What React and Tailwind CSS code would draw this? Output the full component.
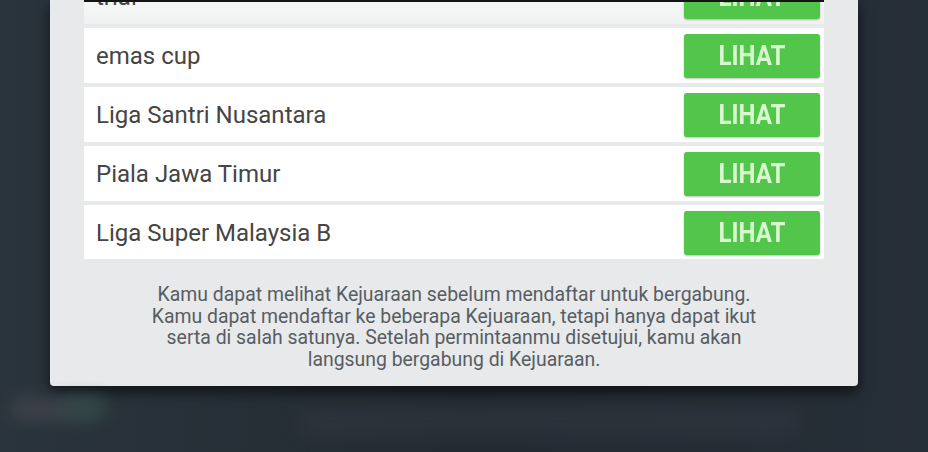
import React from 'react'

const tournaments = ['trial', 'emas cup', 'Liga Santri Nusantara', 'Piala Jawa Timur', 'Liga Super Malaysia B']

function Row({ name, first }) {
  return (
    <div className={`flex h-[55px] items-center justify-between pl-[12px] pr-[4px] ${first ? 'bg-gradient-to-b from-white to-[#f0f1f1]' : 'bg-white'}`}>
      <span className="text-[24px] leading-none text-[#454545]" style={{ fontFamily: 'Roboto, sans-serif' }}>{name}</span>
      <button className="flex h-[44px] w-[136px] items-center justify-center rounded-[3px] bg-[#52c54b] shadow-[0_1px_2px_rgba(0,0,0,0.25)]">
        <span className="inline-block scale-x-[0.86] text-[28px] font-bold leading-none text-[#d9f8cf]" style={{ fontFamily: 'Roboto, sans-serif' }}>LIHAT</span>
      </button>
    </div>
  )
}

export default function App() {
  return (
    <div className="relative h-[452px] w-[928px] overflow-hidden bg-gradient-to-r from-[#2a343c] via-[#232a32] to-[#262e37]">
      {/* blurred background strip under modal */}
      <div className="absolute left-[10px] top-[398px] h-[22px] w-[90px] rounded-full bg-[#4a4c55] opacity-60 blur-[8px]" />
      <div className="absolute left-[60px] top-[398px] h-[20px] w-[50px] rounded-full bg-[#2f4a47] opacity-70 blur-[8px]" />
      <div className="absolute left-[300px] top-[410px] h-[24px] w-[500px] rounded-full bg-[#343a43] opacity-60 blur-[10px]" />

      <div className="mx-[50px] flex h-[386px] w-[808px] flex-col overflow-hidden rounded-b-[4px] bg-[#e7e9ea] shadow-[0_6px_14px_rgba(0,0,0,0.6)]">
        <div className="relative mx-[34px] h-[259px] overflow-hidden">
          <div className="absolute left-0 right-0 top-0 z-10 h-[2px] bg-[#141414]" />
          <div className="mt-[-31px] flex flex-col gap-[4px]">
            {tournaments.map((t, i) => (
              <Row key={t} name={t} first={i === 0} />
            ))}
          </div>
        </div>
        <p className="mt-[25px] px-[40px] text-center text-[19.4px] leading-[21.5px] text-[#575d63]" style={{ fontFamily: 'Roboto, sans-serif' }}>
          Kamu dapat melihat Kejuaraan sebelum mendaftar untuk bergabung.
          <br />
          Kamu dapat mendaftar ke beberapa Kejuaraan, tetapi hanya dapat ikut
          <br />
          serta di salah satunya. Setelah permintaanmu disetujui, kamu akan
          <br />
          langsung bergabung di Kejuaraan.
        </p>
      </div>
    </div>
  )
}
